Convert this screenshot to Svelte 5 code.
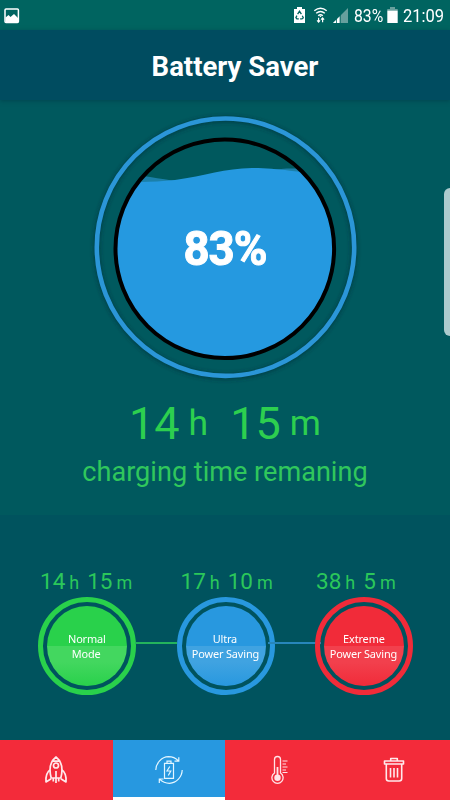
<script>
  const modes = [
    { h: '14', m: '15', lines: ['Normal', 'Mode'], tone: 'green' },
    { h: '17', m: '10', lines: ['Ultra', 'Power Saving'], tone: 'blue' },
    { h: '38', m: '5', lines: ['Extreme', 'Power Saving'], tone: 'red' }
  ];
</script>

<div class="screen">
  <div class="status">
    <svg class="photo" width="16" height="16" viewBox="0 0 16 16">
      <rect x="1" y="1" width="13.4" height="13.4" rx="1" fill="none" stroke="#fff" stroke-width="1.5" />
      <path d="M1.500 9.500l3-2.500 2 2 3.500-3 4 4v4.500h-12.500z" fill="#fff" />
    </svg>
    <svg class="signals" width="56" height="18" viewBox="0 0 56 18">
      <path d="M1 3h3V1h5v2h3v14H1z" fill="#fff" />
      <path d="M4.6 8.2L6.5 5.3l1.9 2.9M9.3 9.7l1 2.2-1.3 1H7.1M5.8 12.900H3.900l-1-1.300 1-2" fill="none" stroke="#006460" stroke-width="1.3" />
      <path d="M21.300 4.700q6.200-5 12.400 0M23.200 7.300q4.300-3.500 8.600 0M25.200 9.700q2.300-1.800 4.600 0" fill="none" stroke="#fff" stroke-width="1.4" />
      <path d="M27.500 9.600l1 1.300h-2z" fill="#fff" />
      <path d="M25.600 11.800v4M24.100 14.300l1.500 1.800 1.500-1.800M29.600 16.200v-4M28.100 13.700l1.500-1.800 1.500 1.800" fill="none" stroke="#fff" stroke-width="1.2" />
      <path d="M40 17L55 2v15z" fill="#67a09d" />
      <path d="M40 17l6.600-6.600V17z" fill="#fff" />
      <path d="M43.500 12v5M47.300 8v9" stroke="#006460" stroke-width=".8" />
    </svg>
    <span class="pct">83%</span>
    <svg class="batt" width="11" height="16" viewBox="0 0 11 16">
      <path d="M3 0h5v2h2.700v2H.3V2H3z" fill="#67a09d" />
      <path d="M.3 3.700h10.400V16H.3z" fill="#fff" />
    </svg>
    <span class="clock">21:09</span>
  </div>

  <header><h1>Battery Saver</h1></header>

  <main>
    <div class="gauge">
      <svg width="274" height="274" viewBox="88 110 274 274">
        <defs>
          <filter id="soft" x="-10%" y="-10%" width="120%" height="120%"><feGaussianBlur stdDeviation="2" /></filter>
          <clipPath id="bowl"><circle cx="224.8" cy="248.8" r="109" /></clipPath>
        </defs>
        <circle cx="225.5" cy="248" r="128.7" fill="none" stroke="#002f38" stroke-opacity=".6" stroke-width="6" filter="url(#soft)" />
        <circle cx="225.5" cy="247.2" r="128.7" fill="none" stroke="#2b96d8" stroke-width="4.6" />
        <g clip-path="url(#bowl)">
          <path d="M110 172C132 174 150 177 172 180.500L262 178L270 170C288 167.500 306 168 340 172V185H110z" fill="#1b80aa" />
          <path d="M110 180C130 182.500 150 182.500 175 180C205 176 225 168.300 252 168C278 168 300 173 340 175V370H110z" fill="#2599e0" />
        </g>
        <circle cx="224.8" cy="248.8" r="109.3" fill="none" stroke="#000" stroke-width="4" />
      </svg>
      <strong>83%</strong>
    </div>
    <div class="time big"><b>14</b><i class="h">h</i><b class="mins">15</b><i class="m">m</i></div>
    <p>charging time remaning</p>
    <div class="edge"></div>
  </main>

  <section>
    {#each modes as mode, k}
      <div class="mode {mode.tone}">
        <div class="time small"><b>{mode.h}</b><i class="h">h</i><b class="mins">{mode.m}</b><i class="m">m</i></div>
        <div class="ring">
          <div class="disc">{#each mode.lines as line}<span>{line}</span>{/each}</div>
          {#if k < 2}<div class="link"></div>{/if}
        </div>
      </div>
    {/each}
  </section>

  <nav>
    <div class="tab">
      <svg width="24" height="30" viewBox="0 0 24 30" fill="none" stroke="#ffe9ec" stroke-width="1.700" stroke-linejoin="round">
        <path d="M7.200 23C4.800 14 6.200 6.500 12 2c5.800 4.500 7.200 12 4.800 21zM8.300 6.200h7.400M12 16v12M9.300 23v3.500M14.700 23v3.500" />
        <circle cx="12" cy="10.500" r="2.500" />
        <path d="M6 15c-3.500 2.500-4.500 6-4 12l5.200-3.200M18 15c3.500 2.500 4.500 6 4 12l-5.200-3.200" />
      </svg>
    </div>
    <div class="tab active">
      <svg width="30" height="30" viewBox="0 0 30 30" fill="none" stroke="#e4f6ff" stroke-width="1.200">
        <path d="M1.800 15C2 8 7.500 2 14.500 1.700c4 0 7 1.300 10 4.300M20.500 6.200h4.300V2.300M28.200 15C28 22 22.500 28 15.500 28.300c-4 0-7-1.300-9.800-4.200M9.500 24H5.300v4" />
        <path d="M10.500 8.300h9v15h-9zM13 8V6.200h4V8M15.800 11.500l-2.800 4.500h3.800L14.300 20.500" />
      </svg>
    </div>
    <div class="tab">
      <svg width="24" height="30" viewBox="0 0 24 30" fill="none" stroke="#ffe3e7" stroke-width="1.300">
        <path d="M5.500 18V4.500a3 3 0 0 1 6 0V18a5.600 5.600 0 1 1-6 0z" />
        <path d="M8.500 12v8" stroke-width="1.800" />
        <circle cx="8.500" cy="22.700" r="3.200" fill="#ffe3e7" stroke="none" />
        <path d="M13.500 6h5M13.500 9h3.500M13.500 12h5M13.500 15h3.500M13.500 17.500h5" stroke-width="1" />
      </svg>
    </div>
    <div class="tab">
      <svg width="24" height="30" viewBox="0 0 24 30" fill="none" stroke="#ffe9ec" stroke-width="1.600" stroke-linejoin="round">
        <path d="M8.700 6V3.500h6.600V6M2.500 6h19v3h-19zM4.300 9v14.500q0 2.500 2.500 2.500h10.400q2.500 0 2.500-2.500V9" />
        <path d="M8.500 13v9.500M12 13v9.500M15.500 13v9.500" />
      </svg>
    </div>
  </nav>
</div>

<style>
  :global(body) { margin: 0; }
  .screen { width: 450px; height: 800px; display: flex; flex-direction: column; overflow: hidden; background: #00535e; font-family: Roboto, sans-serif; color: #fff; }
  svg { display: block; flex: none; }
  .status { height: 30px; flex: none; display: flex; align-items: center; background: #006460; font-size: 19px; line-height: 30px; }
  .photo { margin-left: 4px; margin-top: 1px; }
  .signals { margin-left: 273px; }
  .pct, .clock { display: inline-block; transform-origin: 0 50%; white-space: nowrap; padding-top: 2px; }
  .pct { width: 29px; margin-left: 5px; transform: scaleX(.83); }
  .batt { margin-left: 4px; }
  .clock { margin-left: 5px; transform: scaleX(.87); }
  header { height: 70px; flex: none; background: #004c60; display: flex; justify-content: center; position: relative; z-index: 1; box-shadow: 0 1px 4px #00394699; }
  h1 { margin: 0 0 0 20px; font-size: 27.500px; line-height: 74px; font-weight: 700; white-space: nowrap; letter-spacing: 0; }
  main { height: 415px; flex: none; background: #00595e; position: relative; display: flex; flex-direction: column; align-items: center; }
  .gauge { margin-top: 10px; width: 274px; height: 274px; position: relative; }
  .gauge strong { position: absolute; inset: 0; line-height: 278px; text-align: center; font-size: 48px; letter-spacing: -1px; transform: scaleX(.95); -webkit-text-stroke: 1px #fff; }
  .time { display: flex; align-items: baseline; color: #2dcf4f; white-space: nowrap; }
  .time b, .time i { font-weight: 400; font-style: normal; }
  .big { height: 60px; line-height: 60px; align-self: flex-start; margin-left: 129px; margin-top: 10px; }
  .big b { font-size: 45px; }
  .big i { font-size: 35.500px; position: relative; top: -4px; }
  .big .h { margin-left: 9px; }
  .big .mins { margin-left: 22px; }
  .big .m { margin-left: 9px; }
  p { margin: 2px 0 0; font-size: 27.100px; line-height: 32px; color: #30c75c; white-space: nowrap; }
  .edge { position: absolute; right: 0; top: 88px; width: 6px; height: 148px; border-radius: 6px 0 0 6px; background: #accbce; }
  section { height: 225px; flex: none; display: flex; padding-left: 38px; gap: 40.500px; }
  .mode { width: 98px; display: flex; flex-direction: column; }
  .small { height: 28px; line-height: 28px; margin: 52px 0 2px 2px; color: #2bc75a; }
  .small b { font-size: 22.500px; }
  .small i { font-size: 18px; }
  .small .h { margin-left: 4px; }
  .small .mins { margin-left: 8px; }
  .small .m { margin-left: 4px; }
  .blue .small { margin-left: 4px; }
  .red .small { margin-left: 1px; }
  .ring { box-sizing: border-box; width: 98px; height: 98px; border: 5px solid var(--c); border-radius: 50%; padding: 4px; position: relative; }
  .disc { height: 80px; border-radius: 50%; display: flex; flex-direction: column; align-items: center; padding-top: 26px; box-sizing: border-box; background: linear-gradient(var(--c) 0 50%, var(--l) 50% 70%, var(--c) 100%); font: 11.500px/14.500px "Noto Sans", sans-serif; letter-spacing: -.15px; white-space: nowrap; }
  .disc span { transform: scaleX(.95); margin-left: -1px; }
  .green { --c: #29d14b; --l: #43d75f; }
  .blue { --c: #2898df; --l: #40a3e1; }
  .red { --c: #f12b39; --l: #f2404d; }
  .link { position: absolute; left: 92px; top: 39.500px; width: 42px; height: 2px; background: #24b35c; }
  .blue .link { width: 53px; left: 86px; background: #2786bb; }
  nav { height: 60px; flex: none; display: flex; background: #f32b3a; }
  .tab { box-sizing: border-box; flex: 1; display: flex; justify-content: center; padding-top: 15px; }
  .active { background: #2798e0; border-bottom: 3px solid #fff; }
</style>
